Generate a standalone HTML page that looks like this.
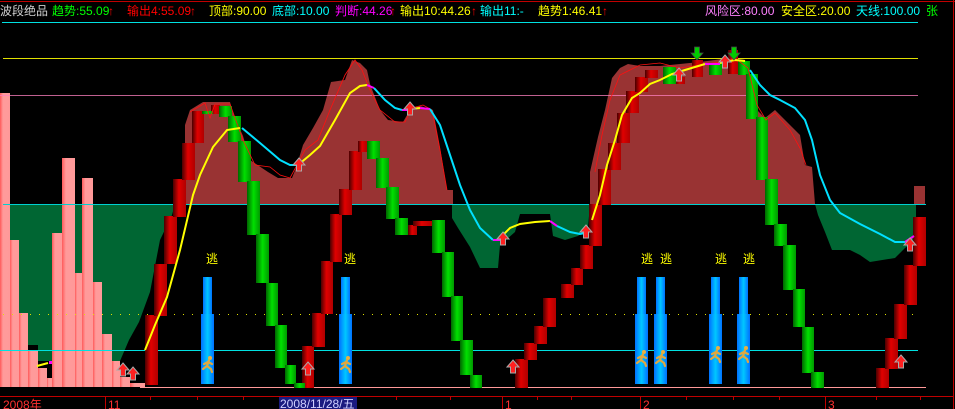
<!DOCTYPE html>
<html><head><meta charset="utf-8"><style>
html,body{margin:0;padding:0;background:#000;width:955px;height:409px;overflow:hidden}
svg{display:block}
text{font-family:"Liberation Sans","Noto Sans CJK SC",sans-serif;font-size:12px}
</style></head><body>
<svg width="955" height="409" viewBox="0 0 955 409" xmlns="http://www.w3.org/2000/svg">
<defs>
<linearGradient id="rg" x1="0" x2="1"><stop offset="0" stop-color="#4a0000"/><stop offset="0.45" stop-color="#e00000"/><stop offset="1" stop-color="#b00000"/></linearGradient>
<linearGradient id="gg" x1="0" x2="1"><stop offset="0" stop-color="#006600"/><stop offset="0.5" stop-color="#00e000"/><stop offset="1" stop-color="#009900"/></linearGradient>
<linearGradient id="bg" x1="0" x2="1"><stop offset="0" stop-color="#0070ff"/><stop offset="0.5" stop-color="#00c8ff"/><stop offset="1" stop-color="#0070ff"/></linearGradient>
<linearGradient id="pg" x1="0" x2="1"><stop offset="0" stop-color="#ff5a5a"/><stop offset="0.3" stop-color="#ff9a9a"/><stop offset="1" stop-color="#ff9999"/></linearGradient>
<g id="ua"><path d="M0,-7 L6,0 L2.5,0 L2.5,6 L-2.5,6 L-2.5,0 L-6,0 Z" fill="#ff2020" stroke="#aaa" stroke-width="1"/></g>
<g id="da"><path d="M0,7 L6,0 L2.5,0 L2.5,-6 L-2.5,-6 L-2.5,0 L-6,0 Z" fill="#00cc00" stroke="#444" stroke-width="0.8"/></g>
<g id="man"><circle cx="2" cy="-7" r="2" fill="#e8b040"/><path d="M1,-5 L-1,1 L-5,4 M-1,1 L3,4 L4,7 M0,-3 L4,-1 M0,-3 L-4,-1" stroke="#e0a840" stroke-width="2.2" fill="none" stroke-linecap="round"/></g>
</defs>

<line x1="0" y1="1.5" x2="955" y2="1.5" stroke="#c00000" stroke-width="1"/>
<line x1="953.5" y1="0" x2="953.5" y2="409" stroke="#c00000"/>
<line x1="2" y1="22.5" x2="918" y2="22.5" stroke="#00e0e0"/>

<polygon fill="#006633" points="10,204 175,204 172,215 160,240 150,292 139,322 129,340 120,361 38,361 38,345 10,345"/>
<polygon fill="#006633" points="452,204 590,204 588,228 578,236 565,240 553,236 550,214 520,214 515,232 500,245 498,268 480,268 470,247 458,228 452,218"/>
<polygon fill="#006633" points="815,204 916,204 916,240 905,248 895,258 870,262 860,255 850,250 832,250 825,232 818,215"/>

<polygon fill="#993333" points="185,204 185,125 190,110 203,102 230,102 233,113 243,136 250,160 268,172 278,178 292,178 296,168 303,145 313,128 323,110 331,82 345,80 352,60 360,63 367,70 370,84 380,110 388,120 403,122 410,110 420,106 433,110 440,147 447,190 453,190 453,204"/>
<polygon fill="#993333" points="590,204 590,172 598,137 605,110 612,78 620,68 628,64 640,66 660,66 700,62 730,58 745,60 750,75 757,110 765,118 775,110 790,125 800,135 805,165 812,167 815,204"/>
<rect x="914" y="186" width="11" height="18" fill="#993333"/>

<g fill="url(#pg)">
<rect x="0" y="93" width="10" height="294"/>
<rect x="10" y="240" width="9" height="147"/>
<rect x="19" y="313" width="9" height="74"/>
<rect x="28" y="350" width="10" height="37"/>
<rect x="38" y="368" width="9" height="19"/>
<rect x="47" y="378" width="5" height="9"/>
<rect x="52" y="233" width="10" height="154"/>
<rect x="62" y="158" width="13" height="229"/>
<rect x="75" y="273" width="7" height="114"/>
<rect x="82" y="178" width="11" height="209"/>
<rect x="93" y="282" width="9" height="105"/>
<rect x="102" y="334" width="10" height="53"/>
<rect x="112" y="361" width="8" height="26"/>
<rect x="120" y="377" width="10" height="10"/>
<rect x="130" y="383" width="15" height="4"/>
</g>

<line x1="3" y1="58.5" x2="918" y2="58.5" stroke="#e0e000"/>
<line x1="0" y1="95.5" x2="918" y2="95.5" stroke="#ff80c0" stroke-width="0.8"/>
<line x1="3" y1="204.5" x2="926" y2="204.5" stroke="#00d0d0"/>
<line x1="3" y1="314.5" x2="918" y2="314.5" stroke="#e0e000" stroke-dasharray="1,8"/>
<line x1="0" y1="350.5" x2="918" y2="350.5" stroke="#00e0e0"/>
<line x1="140" y1="387.5" x2="926" y2="387.5" stroke="#ff9999"/>

<g fill="url(#rg)">
<rect x="145" y="315" width="13" height="70"/>
<rect x="154" y="264" width="13" height="52"/>
<rect x="164" y="216" width="13" height="48"/>
<rect x="173" y="179" width="13" height="38"/>
<rect x="182" y="143" width="13" height="37"/>
<rect x="192" y="111" width="12" height="32"/>
<rect x="211" y="105" width="9" height="9"/>
<rect x="302" y="346" width="12" height="42"/>
<rect x="312" y="313" width="13" height="34"/>
<rect x="321" y="261" width="12" height="53"/>
<rect x="330" y="214" width="12" height="48"/>
<rect x="339" y="189" width="13" height="26"/>
<rect x="349" y="151" width="13" height="39"/>
<rect x="358" y="141" width="9" height="11"/>
<rect x="408" y="225" width="9" height="10"/>
<rect x="413" y="221" width="19" height="5"/>
<rect x="515" y="359" width="13" height="29"/>
<rect x="524" y="343" width="13" height="17"/>
<rect x="534" y="326" width="13" height="18"/>
<rect x="543" y="298" width="13" height="29"/>
<rect x="561" y="284" width="13" height="14"/>
<rect x="571" y="268" width="12" height="17"/>
<rect x="580" y="245" width="13" height="24"/>
<rect x="589" y="204" width="13" height="42"/>
<rect x="598" y="169" width="13" height="36"/>
<rect x="608" y="143" width="13" height="27"/>
<rect x="617" y="113" width="13" height="30"/>
<rect x="626" y="91" width="13" height="22"/>
<rect x="635" y="77" width="13" height="15"/>
<rect x="645" y="70" width="13" height="8"/>
<rect x="675" y="77" width="10" height="7"/>
<rect x="692" y="60" width="11" height="17"/>
<rect x="728" y="50" width="10" height="24"/>
<rect x="876" y="368" width="13" height="20"/>
<rect x="885" y="338" width="13" height="31"/>
<rect x="894" y="304" width="13" height="35"/>
<rect x="904" y="265" width="13" height="40"/>
<rect x="913" y="217" width="13" height="49"/>
</g>
<g fill="url(#gg)">
<rect x="202" y="111" width="11" height="3"/>
<rect x="219" y="106" width="13" height="11"/>
<rect x="228" y="116" width="13" height="26"/>
<rect x="238" y="141" width="13" height="41"/>
<rect x="247" y="181" width="13" height="54"/>
<rect x="256" y="234" width="13" height="49"/>
<rect x="266" y="283" width="12" height="43"/>
<rect x="275" y="325" width="12" height="43"/>
<rect x="285" y="365" width="11" height="19"/>
<rect x="294" y="383" width="11" height="5"/>
<rect x="367" y="141" width="13" height="18"/>
<rect x="376" y="158" width="13" height="30"/>
<rect x="386" y="187" width="13" height="32"/>
<rect x="395" y="218" width="13" height="17"/>
<rect x="432" y="220" width="13" height="33"/>
<rect x="442" y="252" width="12" height="45"/>
<rect x="451" y="296" width="12" height="45"/>
<rect x="460" y="340" width="13" height="35"/>
<rect x="470" y="375" width="12" height="13"/>
<rect x="663" y="67" width="13" height="17"/>
<rect x="709" y="63" width="13" height="12"/>
<rect x="738" y="61" width="12" height="14"/>
<rect x="746" y="74" width="12" height="45"/>
<rect x="756" y="117" width="12" height="63"/>
<rect x="765" y="179" width="13" height="46"/>
<rect x="774" y="224" width="13" height="22"/>
<rect x="783" y="245" width="13" height="45"/>
<rect x="793" y="289" width="12" height="38"/>
<rect x="802" y="327" width="12" height="46"/>
<rect x="811" y="372" width="13" height="16"/>
</g>

<polyline fill="none" stroke="#ff1010" stroke-width="0.8" points="190,112 205,103 210,118 215,104 230,104 243,140 255,165 270,167 280,175 290,178 305,150 318,140 330,110 345,75 355,60 362,70 370,90 380,110 395,122 405,122 412,108 423,105 432,110 440,150 447,190"/>
<polyline fill="none" stroke="#ff1010" stroke-width="0.8" points="595,172 602,135 610,100 620,75 640,65 660,63 680,68 700,65 720,62 735,58 748,68 757,105 766,120 775,113 790,130 800,148 806,165"/>

<polyline fill="none" stroke="#ffff00" stroke-width="2" points="145,350 155,325 167,297 180,250 193,195 200,175 213,147 227,130 240,128"/>
<polyline fill="none" stroke="#00e0ff" stroke-width="2" points="242,128 260,143 280,160 290,165 298,165"/>
<polyline fill="none" stroke="#ffff00" stroke-width="2" points="298,165 310,155 320,146 335,120 350,93 360,86 367,85"/>
<polyline fill="none" stroke="#ff00ff" stroke-width="2" points="367,85 374,88"/>
<polyline fill="none" stroke="#00e0ff" stroke-width="2" points="374,88 385,100 395,108 402,110"/>
<polyline fill="none" stroke="#ff00ff" stroke-width="2" points="402,110 410,110"/>
<polyline fill="none" stroke="#ffff00" stroke-width="2" points="410,109 420,108"/>
<polyline fill="none" stroke="#ff00ff" stroke-width="2" points="420,108 430,109"/>
<polyline fill="none" stroke="#00e0ff" stroke-width="2" points="430,109 440,125 450,155 460,185 470,210 480,228 493,240"/>
<polyline fill="none" stroke="#ff00ff" stroke-width="2" points="493,240 500,240"/>
<polyline fill="none" stroke="#ffff00" stroke-width="2" points="502,236 510,228 520,224 535,222 550,221"/>
<polyline fill="none" stroke="#ff00ff" stroke-width="2" points="550,221 557,226"/>
<polyline fill="none" stroke="#00e0ff" stroke-width="2" points="557,226 570,232 580,234 585,233"/>
<polyline fill="none" stroke="#ff00ff" stroke-width="2" points="583,233 590,230"/>
<polyline fill="none" stroke="#ffff00" stroke-width="2" points="592,220 600,195 607,165 615,140 622,115 632,98 640,93 650,84 660,80 672,74 685,70 695,67 705,64"/>
<polyline fill="none" stroke="#ff00ff" stroke-width="2" points="705,64 720,64"/>
<polyline fill="none" stroke="#ffff00" stroke-width="2" points="720,63 735,60 745,61"/>
<polyline fill="none" stroke="#00e0ff" stroke-width="2" points="750,70 760,85 770,95 780,100 795,108 805,120 812,140 820,175 830,200 840,213 860,224 880,234 895,242 905,242"/>
<polyline fill="none" stroke="#ff00ff" stroke-width="2" points="905,242 914,236"/>
<polyline fill="none" stroke="#ffff00" stroke-width="2" points="37,366 48,363"/>
<rect x="49" y="361" width="3" height="3" fill="#ff00ff"/>

<g fill="url(#bg)">
<rect x="203" y="277" width="9" height="37"/><rect x="201" y="314" width="13" height="70"/>
<rect x="341" y="277" width="9" height="37"/><rect x="339" y="314" width="13" height="70"/>
<rect x="637" y="277" width="9" height="37"/><rect x="635" y="314" width="13" height="70"/>
<rect x="656" y="277" width="9" height="37"/><rect x="654" y="314" width="13" height="70"/>
<rect x="711" y="277" width="9" height="37"/><rect x="709" y="314" width="13" height="70"/>
<rect x="739" y="277" width="9" height="37"/><rect x="737" y="314" width="13" height="70"/>
</g>
<g>
<use href="#man" x="208" y="365"/><use href="#man" x="346" y="365"/>
<use href="#man" x="642" y="359"/><use href="#man" x="661" y="359"/>
<use href="#man" x="716" y="355"/><use href="#man" x="744" y="355"/>
</g>
<g fill="#ffff00" font-size="12">
<text x="206" y="263">逃</text><text x="344" y="263">逃</text>
<text x="641" y="263">逃</text><text x="660" y="263">逃</text>
<text x="715" y="263">逃</text><text x="743" y="263">逃</text>
</g>

<use href="#ua" x="123" y="370"/><use href="#ua" x="133" y="374"/>
<use href="#ua" x="308" y="369"/><use href="#ua" x="299" y="165"/>
<use href="#ua" x="410" y="109"/><use href="#ua" x="503" y="239"/>
<use href="#ua" x="586" y="232"/><use href="#ua" x="513" y="367"/>
<use href="#ua" x="679" y="75"/><use href="#ua" x="725" y="62"/>
<use href="#ua" x="901" y="362"/><use href="#ua" x="910" y="245"/>
<use href="#da" x="697" y="53"/><use href="#da" x="734" y="53"/>

<line x1="0" y1="396.5" x2="953" y2="396.5" stroke="#c00000"/>
<g stroke="#c00000">
<line x1="105.5" y1="396" x2="105.5" y2="409"/>
<line x1="502.5" y1="396" x2="502.5" y2="409"/>
<line x1="640.5" y1="396" x2="640.5" y2="409"/>
<line x1="825.5" y1="396" x2="825.5" y2="409"/>
<line x1="150.5" y1="396" x2="150.5" y2="400"/><line x1="197.5" y1="396" x2="197.5" y2="400"/>
<line x1="243.5" y1="396" x2="243.5" y2="400"/><line x1="396.5" y1="396" x2="396.5" y2="400"/>
<line x1="450.5" y1="396" x2="450.5" y2="400"/><line x1="537.5" y1="396" x2="537.5" y2="400"/>
<line x1="571.5" y1="396" x2="571.5" y2="400"/><line x1="686.5" y1="396" x2="686.5" y2="400"/>
<line x1="733.5" y1="396" x2="733.5" y2="400"/><line x1="779.5" y1="396" x2="779.5" y2="400"/>
<line x1="876.5" y1="396" x2="876.5" y2="400"/><line x1="920.5" y1="396" x2="920.5" y2="400"/>
</g>
<g fill="#ff3030" font-size="12">
<text x="3" y="409">2008年</text>
<text x="108" y="409">11</text>
<text x="505" y="409">1</text>
<text x="643" y="409">2</text>
<text x="828" y="409">3</text>
</g>
<rect x="279" y="397" width="78" height="12" fill="#1a1a80"/>
<text x="280" y="408" fill="#d0d0ff" font-size="12">2008/11/28/五</text>

<g font-size="12">
<text x="0" y="15" fill="#d0d0d0">波段绝品</text>
<text x="52" y="15" fill="#00ff00">趋势:55.09</text>
<text x="108" y="15" fill="#ff0000">↑</text>
<text x="127" y="15" fill="#ff0000">输出4:55.09</text>
<text x="190" y="15" fill="#ff0000">↑</text>
<text x="209" y="15" fill="#ffff00">顶部:90.00</text>
<text x="272" y="15" fill="#00ffff">底部:10.00</text>
<text x="335" y="15" fill="#ff00ff">判断:44.26</text>
<text x="390" y="15" fill="#ff0000">↑</text>
<text x="400" y="15" fill="#ffff00">输出10:44.26</text>
<text x="471" y="15" fill="#ff0000">↑</text>
<text x="480" y="15" fill="#00ffff">输出11:-</text>
<text x="538" y="15" fill="#ffff00">趋势1:46.41</text>
<text x="602" y="15" fill="#ff0000">↑</text>
<text x="705" y="15" fill="#ff80ff">风险区:80.00</text>
<text x="781" y="15" fill="#ffff00">安全区:20.00</text>
<text x="856" y="15" fill="#00ffff">天线:100.00</text>
<text x="926" y="15" fill="#00ff00">张</text>
</g>
</svg>
</body></html>
